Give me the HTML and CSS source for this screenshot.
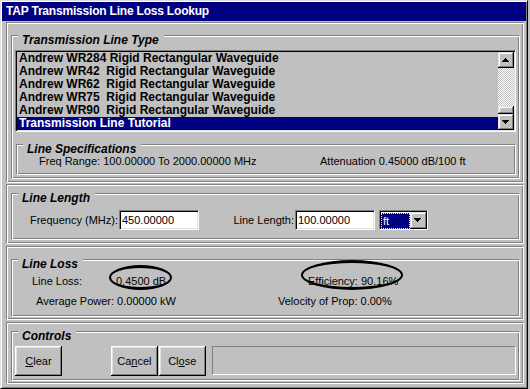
FILE: index.html
```html
<!DOCTYPE html>
<html lang="en">
<head>
  <meta charset="UTF-8" />
  <title>TAP Transmission Line Loss Lookup</title>
  <link rel="stylesheet" href="styles.css">
</head>
<body>
  <div class="window">
    <div class="titlebar">TAP Transmission Line Loss Lookup</div>

    <div class="panel panel-type">
      <div class="group group-type">
        <div class="legend">Transmission Line Type</div>
        <div class="listbox">
          <ul class="items">
            <li>Andrew WR284 Rigid Rectangular Waveguide</li>
            <li>Andrew WR42  Rigid Rectangular Waveguide</li>
            <li>Andrew WR62  Rigid Rectangular Waveguide</li>
            <li>Andrew WR75  Rigid Rectangular Waveguide</li>
            <li>Andrew WR90  Rigid Rectangular Waveguide</li>
            <li class="selected">Transmission Line Tutorial</li>
          </ul>
          <div class="scrollbar">
            <div class="sb-btn">
              <svg width="16" height="16" shape-rendering="crispEdges"><rect x="7" y="6" width="1" height="1"/><rect x="6" y="7" width="3" height="1"/><rect x="5" y="8" width="5" height="1"/><rect x="4" y="9" width="7" height="1"/></svg>
            </div>
            <div class="sb-track"></div>
            <div class="sb-thumb"></div>
            <div class="sb-btn">
              <svg width="16" height="16" shape-rendering="crispEdges"><rect x="4" y="6" width="7" height="1"/><rect x="5" y="7" width="5" height="1"/><rect x="6" y="8" width="3" height="1"/><rect x="7" y="9" width="1" height="1"/></svg>
            </div>
          </div>
        </div>
        <div class="group group-specs">
          <div class="legend">Line Specifications</div>
          <div class="specs-row">
            <span>Freq Range: 100.00000 To 2000.00000 MHz</span>
            <span>Attenuation 0.45000 dB/100 ft</span>
          </div>
        </div>
      </div>
    </div>

    <div class="panel panel-length">
      <div class="group group-length">
        <div class="legend">Line Length</div>
        <div class="length-row">
          <label class="lbl lbl-freq">Frequency (MHz):</label>
          <input class="field" type="text" value="450.00000">
          <label class="lbl lbl-len">Line Length:</label>
          <input class="field" type="text" value="100.00000">
          <div class="combo">
            <span class="combo-value">ft</span>
            <span class="combo-btn">
              <svg width="16" height="16" shape-rendering="crispEdges"><rect x="4" y="6" width="7" height="1"/><rect x="5" y="7" width="5" height="1"/><rect x="6" y="8" width="3" height="1"/><rect x="7" y="9" width="1" height="1"/></svg>
            </span>
          </div>
        </div>
      </div>
    </div>

    <div class="panel panel-loss">
      <div class="group group-loss">
        <div class="legend">Line Loss</div>
        <div class="loss-row loss-row-1">
          <span>Line Loss:</span>
          <span><span class="circled circled-loss">0.4500 dB</span></span>
          <span><span class="circled circled-eff">Efficiency: 90.16%</span></span>
        </div>
        <div class="loss-row loss-row-2">
          <span>Average Power: 0.00000 kW</span>
          <span>Velocity of Prop: 0.00%</span>
        </div>
      </div>
    </div>

    <div class="panel panel-controls">
      <div class="group group-controls">
        <div class="legend">Controls</div>
        <div class="controls-row">
          <button class="btn"><u>C</u>lear</button>
          <button class="btn btn-cancel">Ca<u>n</u>cel</button>
          <button class="btn btn-close">Cl<u>o</u>se</button>
          <div class="status"></div>
        </div>
      </div>
    </div>
  </div>
</body>
</html>
```

FILE: styles.css
```css
* {
  box-sizing: border-box;
}

body {
  margin: 0;
  background: #c0c0c0;
  font-family: "Liberation Sans", Arial, sans-serif;
  font-size: 11px;
  color: #000;
  overflow: hidden;
}

.window {
  width: 528px;
  height: 389px;
  padding: 1px;
  border: 1px solid;
  border-color: #dfdfdf #000 #000 #dfdfdf;
  box-shadow: inset 1px 1px #fff, inset -1px -1px #808080;
}

.titlebar {
  height: 19px;
  background: #000080;
  color: #fff;
  font-size: 12px;
  font-weight: bold;
  line-height: 19px;
  letter-spacing: -0.2px;
  padding-left: 4px;
}

/* etched frames */
.panel,
.group {
  border: 1px solid;
  border-color: #808080 #fff #fff #808080;
  box-shadow: inset 1px 1px #fff, inset -1px -1px #808080;
}

.panel {
  margin: 2px 2px 0 4px;
  padding: 0 3px 0 4px;
}

.panel-type { margin-top: 1px; height: 161px; }
.panel-length { margin-top: 1px; height: 60px; }
.panel-loss { height: 74px; }
.panel-controls { height: 62px; }

.group {
  padding: 0 3px;
}

.legend {
  width: fit-content;
  margin: -2px 0 0 3px;
  padding: 0 5px 0 4px;
  background: #c0c0c0;
  font-size: 12px;
  font-weight: bold;
  font-style: italic;
  line-height: 12px;
}

.group-type { margin-top: 12px; height: 144px; }
.group-length { margin-top: 8px; height: 47px; }
.group-loss { margin-top: 12px; height: 58px; }
.group-controls { margin-top: 8px; height: 50px; }

/* list box */
.listbox {
  display: flex;
  width: 501px;
  height: 82px;
  margin-top: 4px;
  padding: 1px;
  border: 1px solid;
  border-color: #808080 #fff #fff #808080;
  box-shadow: inset 1px 1px #000, inset -1px -1px #dfdfdf;
}

.items {
  flex: 1;
  margin: 0;
  padding: 0;
  list-style: none;
  font-size: 12px;
  font-weight: bold;
  line-height: 13px;
}

.items li {
  height: 13px;
  padding-left: 2px;
  white-space: pre;
  overflow: hidden;
}

.items li.selected {
  background: #000080;
  color: #fff;
}

.scrollbar {
  display: flex;
  flex-direction: column;
  width: 16px;
}

.sb-btn,
.sb-thumb {
  background: #c0c0c0;
  box-shadow: inset -1px -1px #000, inset 1px 1px #dfdfdf, inset -2px -2px #808080, inset 2px 2px #fff;
}

.sb-btn {
  height: 16px;
}

.sb-btn svg {
  display: block;
}

.sb-track {
  flex: 1;
  background-image: conic-gradient(#fff 25%, #c0c0c0 0 50%, #fff 0 75%, #c0c0c0 0);
  background-size: 2px 2px;
}

.sb-thumb {
  height: 8px;
}

/* specs */
.group-specs {
  width: 500px;
  height: 31px;
  margin: 12px 0 0 1px;
}

.specs-row {
  display: grid;
  grid-template-columns: 281px auto;
  padding-left: 19px;
  line-height: 13px;
}

/* line length */
.length-row {
  display: flex;
  align-items: center;
  height: 20px;
  margin-top: 6px;
  margin-left: -3px;
}

.lbl {
  text-align: right;
  padding-right: 1px;
}

.lbl-freq { width: 107px; }
.lbl-len { width: 96px; }

.field {
  width: 80px;
  height: 20px;
  margin: 0;
  padding: 0 2px;
  border: 1px solid;
  border-color: #808080 #fff #fff #808080;
  box-shadow: inset 1px 1px #000, inset -1px -1px #dfdfdf;
  background: #fff;
  font-family: "Liberation Sans", Arial, sans-serif;
  font-size: 11px;
  color: #000;
  outline: none;
}

.combo {
  display: flex;
  align-items: center;
  width: 49px;
  height: 20px;
  margin-left: 4px;
  padding: 1px 0 0 1px;
  border: 1px solid;
  border-color: #808080 #fff #fff #808080;
  box-shadow: inset 1px 1px #000, inset -1px -1px #dfdfdf;
  background: #fff;
}

.combo-value {
  width: 29px;
  height: 16px;
  background: #000080;
  color: #fff;
  border: 1px dotted #ffff80;
  line-height: 14px;
  padding-left: 1px;
}

.combo-btn {
  width: 17px;
  height: 17px;
  margin-top: -1px;
  background: #c0c0c0;
  box-shadow: inset -1px -1px #000, inset 1px 1px #dfdfdf, inset -2px -2px #808080, inset 2px 2px #fff;
}

.combo-btn svg {
  display: block;
}

/* line loss */
.loss-row {
  display: grid;
  line-height: 13px;
}

.loss-row-1 {
  grid-template-columns: 84px 192px auto;
  margin-top: 5px;
  padding-left: 17px;
}

.loss-row-2 {
  grid-template-columns: 242px auto;
  margin-top: 7px;
  padding-left: 21px;
}

.circled {
  position: relative;
  display: inline-block;
}

.circled::after {
  content: "";
  position: absolute;
  border: 2px solid #000;
  border-width: 3px 2px;
  border-radius: 50%;
}

.circled-loss::after {
  left: -7px;
  right: -6px;
  top: -10px;
  bottom: -2px;
}

.circled-eff::after {
  left: -7px;
  right: -5px;
  top: -15px;
  bottom: -2px;
}

/* controls */
.controls-row {
  display: flex;
  align-items: flex-start;
  margin-top: 4px;
}

.btn {
  width: 47px;
  height: 30px;
  margin: 0;
  padding: 0;
  border: none;
  background: #c0c0c0;
  box-shadow: inset -1px -1px #000, inset 1px 1px #fff, inset -2px -2px #808080, inset 2px 2px #dfdfdf;
  font-family: "Liberation Sans", Arial, sans-serif;
  font-size: 11px;
  color: #000;
}

.btn-cancel { margin-left: 49px; }
.btn-close { margin-left: 1px; }

.status {
  width: 305px;
  height: 29px;
  margin-left: 6px;
  border: 1px solid;
  border-color: #808080 #fff #fff #808080;
}
```
